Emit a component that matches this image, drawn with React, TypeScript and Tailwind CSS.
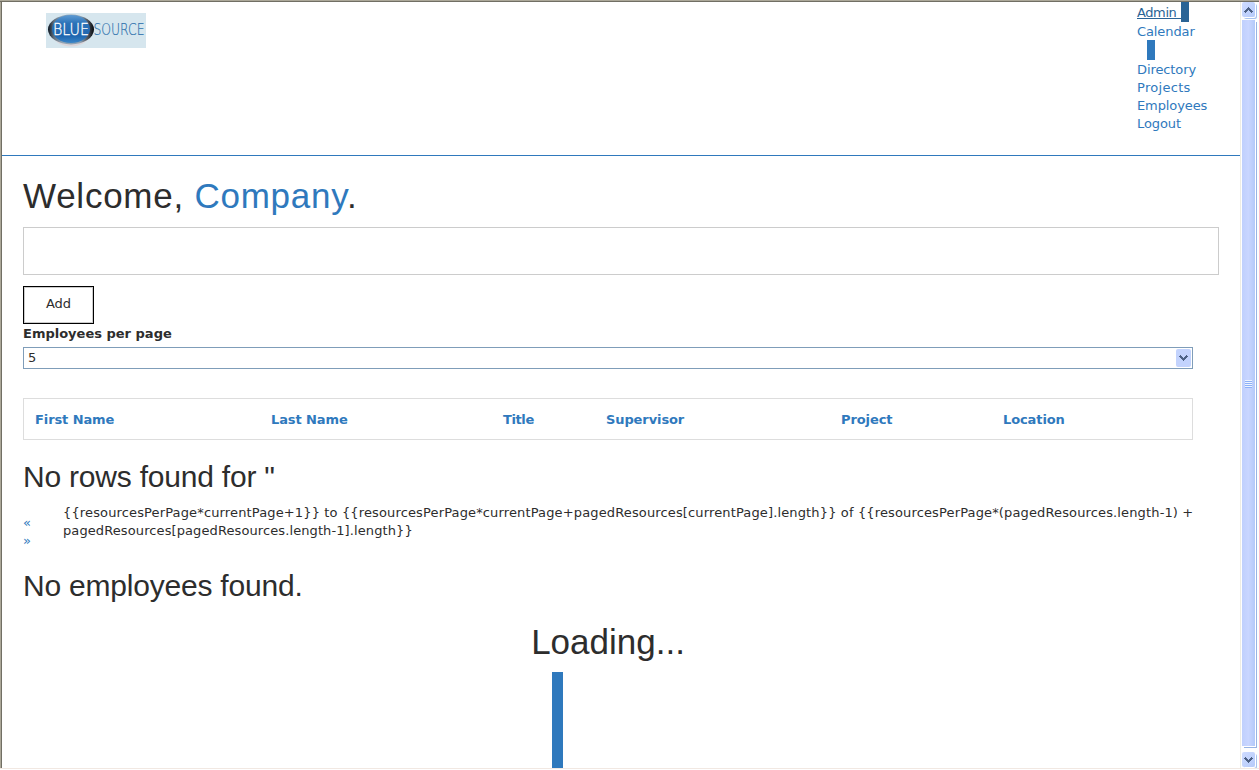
import React from "react";

const navLink = "h-[18px] leading-[19px]";

function Logo() {
  return (
    <svg width="100" height="35" viewBox="0 0 100 35" className="block overflow-visible">
      <defs>
        <linearGradient id="ring" x1="0" y1="0" x2="1" y2="0">
          <stop offset="0" stopColor="#0b1420" />
          <stop offset="0.12" stopColor="#5d6b78" />
          <stop offset="0.3" stopColor="#8fa3b5" />
          <stop offset="0.7" stopColor="#8fa3b5" />
          <stop offset="0.9" stopColor="#3a3f46" />
          <stop offset="1" stopColor="#05080c" />
        </linearGradient>
        <linearGradient id="ball" x1="0" y1="0" x2="0" y2="1">
          <stop offset="0" stopColor="#5e9bd3" />
          <stop offset="0.3" stopColor="#2b72b8" />
          <stop offset="0.75" stopColor="#1f66af" />
          <stop offset="1" stopColor="#3a86c8" />
        </linearGradient>
      </defs>
      <rect width="100" height="35" fill="#d6e6ee" />
      <ellipse cx="25" cy="18" rx="20" ry="15.5" fill="#dcd6da" />
      <ellipse cx="25" cy="16.5" rx="23" ry="15" fill="url(#ring)" />
      <ellipse cx="25" cy="16" rx="19" ry="14" fill="url(#ball)" />
      <text x="7" y="22" fontSize="16" fontFamily="DejaVu Sans" fontWeight="200" fill="#fff" stroke="#fff" strokeWidth="0.3" textLength="36" lengthAdjust="spacingAndGlyphs">BLUE</text>
      <text x="47.5" y="22" fontSize="16" fontFamily="DejaVu Sans" fontWeight="200" fill="#2f72ad" stroke="#2f72ad" strokeWidth="0.2" textLength="51" lengthAdjust="spacingAndGlyphs">SOURCE</text>
    </svg>
  );
}

function Chevron({ up = false }: { up?: boolean }) {
  return (
    <svg width="9" height="6" viewBox="0 0 9 6" shapeRendering="crispEdges" className={up ? "block rotate-180" : "block"}>
      <path d="M0 1h1V0h1v1h1v1h1v1h1V2h1V1h1V0h1v1h1v1H8v1H7v1H6v1H5v1H4V5H3V4H2V3H1V2H0z" fill="#4d6185" />
    </svg>
  );
}

function Scrollbar() {
  const button = "ml-px flex h-[15px] w-[13px] items-center justify-center rounded-xs bg-linear-to-br from-[#cfdcff] to-[#b5cafa] shadow-[1px_1px_0_#fff,2px_2px_0_#a9c3ef]";
  return (
    <div className="flex w-[19px] shrink-0 flex-col border-l border-[#eeede5] bg-[#fefefe]">
      <div className={button}><Chevron up /></div>
      <div className="mt-[3px] ml-px flex w-[13px] flex-1 items-center justify-center bg-linear-to-r from-[#c0d0fd] via-[#c9d6ff] to-[#b3c9f9] pt-[2px] shadow-[1px_1px_0_#fff,2px_2px_0_#98b4e4]">
        <div className="flex flex-col">
          <i className="h-px w-[7px] bg-[#eef4fe]" /><i className="h-px w-[7px] bg-[#8cb0f8]" />
          <i className="h-px w-[7px] bg-[#eef4fe]" /><i className="h-px w-[7px] bg-[#8cb0f8]" />
          <i className="h-px w-[7px] bg-[#eef4fe]" /><i className="h-px w-[7px] bg-[#8cb0f8]" />
          <i className="h-px w-[7px] bg-[#eef4fe]" /><i className="h-px w-[7px] bg-[#8cb0f8]" />
        </div>
      </div>
      <div className="h-[6px]" />
      <div className={button}><Chevron /></div>
      <div className="h-px" />
    </div>
  );
}

export default function App() {
  return (
    <div className="flex h-[770px] w-[1259px] flex-col overflow-hidden bg-white font-['DejaVu_Sans',sans-serif] text-[13px] text-[#2d2d2d]">
      <div className="h-px bg-[#aca899]" />
      <div className="h-px bg-[#716f64]" />
      <div className="flex h-[766px]">
        <div className="w-px bg-[#aca899]" />
        <div className="w-px bg-[#716f64]" />
        <main className="w-[1238px] overflow-hidden">
          <header className="flex h-[154px] justify-between border-b border-[#2f79bd]">
            <div className="pt-[11px] pl-11"><Logo /></div>
            <nav className="flex w-[103px] flex-col tracking-[-0.1px] text-[#2f79bd]">
              <a className="flex h-5 items-start tracking-[-0.4px] text-[#2a6496]"><span className="mt-[2px] h-[15px] w-11 border-b border-[#2a6496] leading-[17px]">Admin</span><i className="h-5 w-2 bg-[#2a6496]" /></a>
              <a className={navLink}>Calendar</a>
              <i className="ml-[10px] h-5 w-2 bg-[#2f79bd]" />
              <a className={navLink}>Directory</a>
              <a className="h-[18px] leading-[19px] tracking-[0.3px]">Projects</a>
              <a className={navLink}>Employees</a>
              <a className={navLink}>Logout</a>
            </nav>
          </header>
          <div className="pl-[21px]">
            <h1 className="mt-[20px] h-[51px] font-['Liberation_Sans',sans-serif] text-[35px] leading-[40px] tracking-[0.75px]">Welcome, <span className="text-[#2f79bd]">Company</span>.</h1>
            <div className="h-12 w-[1196px] border border-[#ccc]" />
            <button className="mt-[11px] block h-[38px] w-[71px] border border-black pb-[2px] shadow-[inset_0_0_0_1px_#ccc]">Add</button>
            <div className="h-[23px] leading-[19px] font-bold">Employees per page</div>
            <div className="flex h-[22px] w-[1170px] items-center justify-between border border-[#7f9db9] pr-px pl-1">
              <span>5</span>
              <span className="flex h-[18px] w-[15px] items-center justify-center rounded-xs bg-[#c3d3fd]"><Chevron /></span>
            </div>
            <div className="mt-[29px] grid h-[42px] w-[1170px] grid-cols-[236px_232px_103px_235px_162px_1fr] items-center border border-[#ddd] pt-px pl-[11px] font-bold tracking-[-0.1px] text-[#2f79bd]">
              <span>First Name</span><span>Last Name</span><span className="tracking-[-0.4px]">Title</span><span>Supervisor</span><span>Project</span><span>Location</span>
            </div>
            <h2 className="mt-5 h-11 font-['Liberation_Sans',sans-serif] text-[30px] leading-[33px] tracking-[-0.21px]">No rows found for "</h2>
            <div className="flex h-[46px] leading-[18px]">
              <div className="w-10 pt-[10px] text-[#2f79bd]"><div>«</div><div>»</div></div>
              <div className="whitespace-nowrap"><div className="tracking-[0.14px]">{"{{resourcesPerPage*currentPage+1}} to {{resourcesPerPage*currentPage+pagedResources[currentPage].length}} of {{resourcesPerPage*(pagedResources.length-1) +"}</div><div className="tracking-[0.1px]">{"pagedResources[pagedResources.length-1].length}}"}</div></div>
            </div>
            <h2 className="mt-[19px] h-[53px] font-['Liberation_Sans',sans-serif] text-[30px] leading-[33px] tracking-[-0.21px]">No employees found.</h2>
            <div className="w-[1170px] text-center font-['Liberation_Sans',sans-serif] text-[35px] leading-[40px]">Loading...</div>
            <i className="mt-[10px] ml-[529px] block h-[96px] w-[11px] bg-[#2f79bd]" />
          </div>
        </main>
        <Scrollbar />
      </div>
      <div className="h-px bg-[#f1e8e2]" />
    </div>
  );
}
